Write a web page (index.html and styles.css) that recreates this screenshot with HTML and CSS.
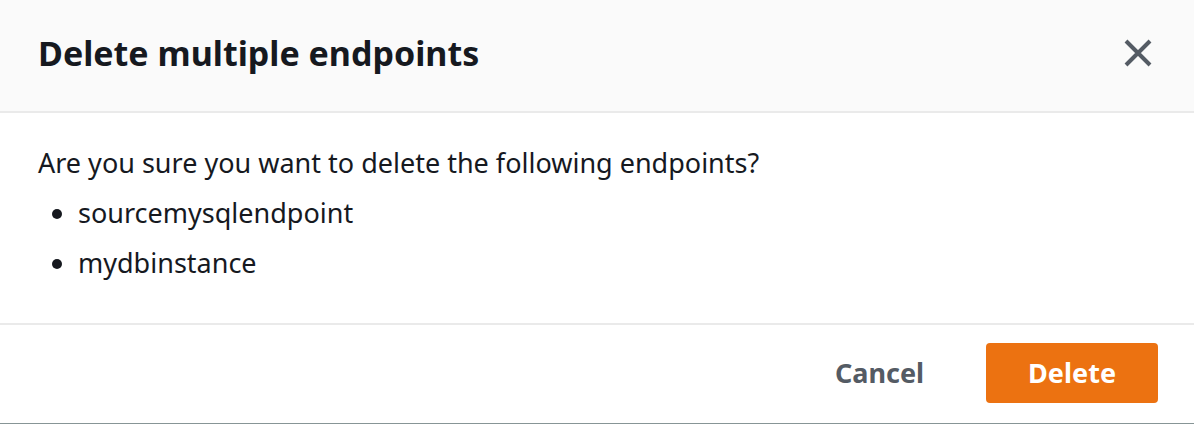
FILE: index.html
```
<!DOCTYPE html>
<html lang="en">
<head>
    <meta charset="utf-8">
    <title>Delete multiple endpoints</title>
    <link rel="stylesheet" href="styles.css">
</head>
<body>
    <div class="modal" role="dialog" aria-labelledby="modal-title">
        <div class="modal-header">
            <h2 id="modal-title">Delete multiple endpoints</h2>
            <button type="button" class="close" aria-label="Close">
                <svg viewBox="0 0 32 32" width="32" height="32">
                    <path d="M4 4l24 24M28 4L4 28"/>
                </svg>
            </button>
        </div>
        <div class="modal-content">
            <p>Are you sure you want to delete the following endpoints?</p>
            <ul>
                <li>sourcemysqlendpoint</li>
                <li>mydbinstance</li>
            </ul>
        </div>
        <div class="modal-footer">
            <button type="button" class="btn btn-link">Cancel</button>
            <button type="button" class="btn btn-primary">Delete</button>
        </div>
    </div>
</body>
</html>
```
FILE: styles.css
```
* {
    box-sizing: border-box;
}
body {
    margin: 0;
    background-color: #fff;
    color: #16191f;
    font-family: "Noto Sans", "Open Sans", sans-serif;
    font-size: 27px;
    line-height: 40px;
}
.modal {
    border-bottom: 1px solid #879596;
}
.modal-header {
    display: flex;
    justify-content: space-between;
    align-items: center;
    padding: 28px 40px 33px 38px;
    background-color: #fafafa;
    border-bottom: 2px solid #eaeaea;
}
.modal-header h2 {
    margin: 0;
    font-size: 34px;
    line-height: 50px;
    font-weight: bold;
}
.close {
    display: flex;
    padding: 0;
    border: none;
    background: none;
    cursor: pointer;
}
.close path {
    fill: none;
    stroke: #545b64;
    stroke-width: 4;
}
.modal-content {
    padding: 30px 38px 40px;
}
.modal-content p {
    margin: 0 0 10px;
}
.modal-content ul {
    margin: 0;
    padding-left: 40px;
}
.modal-content li + li {
    margin-top: 10px;
}
.modal-footer {
    display: flex;
    justify-content: flex-end;
    gap: 20px;
    padding: 18px 36px 20px;
    border-top: 2px solid #eaeaea;
}
.btn {
    height: 60px;
    padding: 0 42px;
    border: none;
    border-radius: 4px;
    font-family: inherit;
    font-size: 27px;
    line-height: 40px;
    font-weight: bold;
    cursor: pointer;
}
.btn-link {
    background: none;
    color: #545b64;
}
.btn-primary {
    background-color: #ec7211;
    color: #fff;
}
```
